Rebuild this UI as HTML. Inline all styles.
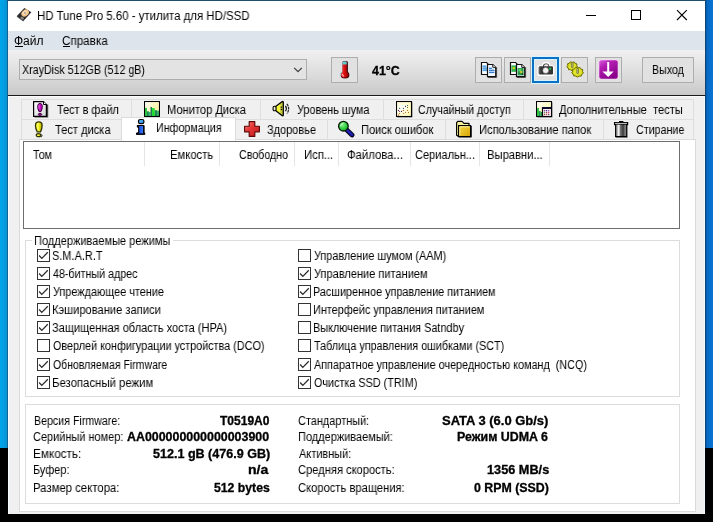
<!DOCTYPE html><html><head><meta charset="utf-8"><style>
*{box-sizing:border-box;margin:0;padding:0}
html,body{width:713px;height:522px;overflow:hidden;background:#000}
body{position:relative;font-family:"Liberation Sans",sans-serif;font-size:11px;color:#000}
.a{position:absolute}
.t{position:absolute;white-space:pre;transform-origin:0 0;line-height:normal;will-change:transform}
#deskL{left:0;top:0;width:8px;height:448px;background:linear-gradient(90deg,#00a6e9 0%,#029fe2 50%,#0b90cf 84%,#0d6aa0 91%,#0b5788 100%)}
#deskR{left:705px;top:0;width:8px;height:448px;background:linear-gradient(90deg,#0a3f70 0%,#0a4a82 10%,#0766be 22%,#066ecb 50%,#0673d2 100%)}
#deskT{left:7px;top:0;width:699px;height:1px;background:#234f6c}
#win{left:8px;top:1px;width:697px;height:513px;background:#f0f0f0;box-shadow:inset 1px 0 0 #f3fcff, inset -1px 0 0 #eefaff}
#title{left:0;top:0;width:697px;height:30px;background:#fff}
#menu{left:0;top:30px;width:697px;height:19px;background:#dee4ec}
#tool{left:0;top:49px;width:697px;height:45px;background:linear-gradient(180deg,#f2f0f1 0%,#e8e7e8 25%,#dcdcdc 55%,#c9c9c9 100%)}
#tline{left:0;top:94px;width:697px;height:1px;background:#1a1a1a}
#wline{left:0;top:95px;width:697px;height:1px;background:#fcfcfc}
.btn{position:absolute;top:57px;width:27px;height:26px;background:#e1e1e1;border:1px solid #adadad}
.tab{position:absolute;height:20px;background:#f0f0f0;border:1px solid #dedede;border-bottom:none}
.cb{position:absolute;width:13px;height:13px;background:#fff;border:1px solid #333}
.gb{position:absolute;border:1px solid #dcdcdc}
.hs{position:absolute;top:141px;width:1px;height:24px;background:#e5e5e5}
</style></head><body><div class="a" id="deskL"></div><div class="a" id="deskR"></div><div class="a" id="deskT"></div>
<div class="a" id="win"><div class="a" id="title"></div><div class="a" id="menu"></div><div class="a" id="tool"></div><div class="a" id="tline"></div><div class="a" id="wline"></div></div>
<div class="a" style="left:19px;top:59px;width:288px;height:21px;background:#e3e3e3;border:1px solid #adadad"></div><svg class="a" style="left:293px;top:67px" width="10" height="6" viewBox="0 0 10 6"><path d="M1.2 0.9 L5 4.7 L8.8 0.9" fill="none" stroke="#404040" stroke-width="1.3"/></svg><div class="btn" style="left:331px;top:57px"></div><div class="btn" style="left:475px;top:57px"></div><div class="btn" style="left:504px;top:57px"></div><div class="btn" style="left:561px;top:57px"></div><div class="btn" style="left:595px;top:57px"></div><div class="btn" style="left:532px;top:57px;border:2px solid #0a70c4;box-shadow:0 0 0 1px rgba(215,245,255,.9), inset 0 0 0 1px rgba(215,245,255,.9)"></div><div class="btn" style="left:642px;top:57px;width:52px"></div><div class="tab" style="left:21px;top:99px;width:111px"></div><div class="tab" style="left:131px;top:99px;width:130px"></div><div class="tab" style="left:260px;top:99px;width:124px"></div><div class="tab" style="left:383px;top:99px;width:141px"></div><div class="tab" style="left:523px;top:99px;width:171px"></div><div class="tab" style="left:21px;top:119px;width:101px;height:21px"></div><div class="tab" style="left:121px;top:119px;width:115px;height:21px"></div><div class="tab" style="left:235px;top:119px;width:93px;height:21px"></div><div class="tab" style="left:327px;top:119px;width:119px;height:21px"></div><div class="tab" style="left:445px;top:119px;width:159px;height:21px"></div><div class="tab" style="left:603px;top:119px;width:91px;height:21px"></div><div class="a" style="left:19px;top:139px;width:677px;height:373px;background:#fff;border:1px solid #dadada"></div><div class="a" style="left:121px;top:117px;width:115px;height:24px;background:#fff;border:1px solid #dcdcdc;border-bottom:none"></div><div class="a" style="left:23px;top:141px;width:657px;height:88px;background:#fff;border:1px solid #6e6e6e"></div><div class="hs" style="left:144px;top:142px"></div><div class="hs" style="left:219px;top:142px"></div><div class="hs" style="left:294px;top:142px"></div><div class="hs" style="left:338px;top:142px"></div><div class="hs" style="left:410px;top:142px"></div><div class="hs" style="left:479px;top:142px"></div><div class="hs" style="left:549px;top:142px"></div><div class="gb" style="left:25px;top:240px;width:655px;height:157px"></div><div class="a" style="left:32px;top:236px;width:141px;height:10px;background:#fff"></div><div class="gb" style="left:25px;top:404px;width:655px;height:100px"></div><div class="cb" style="left:37px;top:249px"><svg width="11" height="11" viewBox="0 0 11 11" style="position:absolute;left:0;top:0"><path d="M1.1 5.5 L3.8 8.4 L9.8 2.3" fill="none" stroke="#2a2a2a" stroke-width="1.25"/></svg></div><div class="cb" style="left:298px;top:249px"></div><div class="cb" style="left:37px;top:267px"><svg width="11" height="11" viewBox="0 0 11 11" style="position:absolute;left:0;top:0"><path d="M1.1 5.5 L3.8 8.4 L9.8 2.3" fill="none" stroke="#2a2a2a" stroke-width="1.25"/></svg></div><div class="cb" style="left:298px;top:267px"><svg width="11" height="11" viewBox="0 0 11 11" style="position:absolute;left:0;top:0"><path d="M1.1 5.5 L3.8 8.4 L9.8 2.3" fill="none" stroke="#2a2a2a" stroke-width="1.25"/></svg></div><div class="cb" style="left:37px;top:285px"><svg width="11" height="11" viewBox="0 0 11 11" style="position:absolute;left:0;top:0"><path d="M1.1 5.5 L3.8 8.4 L9.8 2.3" fill="none" stroke="#2a2a2a" stroke-width="1.25"/></svg></div><div class="cb" style="left:298px;top:285px"><svg width="11" height="11" viewBox="0 0 11 11" style="position:absolute;left:0;top:0"><path d="M1.1 5.5 L3.8 8.4 L9.8 2.3" fill="none" stroke="#2a2a2a" stroke-width="1.25"/></svg></div><div class="cb" style="left:37px;top:303px"><svg width="11" height="11" viewBox="0 0 11 11" style="position:absolute;left:0;top:0"><path d="M1.1 5.5 L3.8 8.4 L9.8 2.3" fill="none" stroke="#2a2a2a" stroke-width="1.25"/></svg></div><div class="cb" style="left:298px;top:303px"></div><div class="cb" style="left:37px;top:321px"><svg width="11" height="11" viewBox="0 0 11 11" style="position:absolute;left:0;top:0"><path d="M1.1 5.5 L3.8 8.4 L9.8 2.3" fill="none" stroke="#2a2a2a" stroke-width="1.25"/></svg></div><div class="cb" style="left:298px;top:321px"></div><div class="cb" style="left:37px;top:339px"></div><div class="cb" style="left:298px;top:339px"></div><div class="cb" style="left:37px;top:358px"><svg width="11" height="11" viewBox="0 0 11 11" style="position:absolute;left:0;top:0"><path d="M1.1 5.5 L3.8 8.4 L9.8 2.3" fill="none" stroke="#2a2a2a" stroke-width="1.25"/></svg></div><div class="cb" style="left:298px;top:358px"><svg width="11" height="11" viewBox="0 0 11 11" style="position:absolute;left:0;top:0"><path d="M1.1 5.5 L3.8 8.4 L9.8 2.3" fill="none" stroke="#2a2a2a" stroke-width="1.25"/></svg></div><div class="cb" style="left:37px;top:376px"><svg width="11" height="11" viewBox="0 0 11 11" style="position:absolute;left:0;top:0"><path d="M1.1 5.5 L3.8 8.4 L9.8 2.3" fill="none" stroke="#2a2a2a" stroke-width="1.25"/></svg></div><div class="cb" style="left:298px;top:376px"><svg width="11" height="11" viewBox="0 0 11 11" style="position:absolute;left:0;top:0"><path d="M1.1 5.5 L3.8 8.4 L9.8 2.3" fill="none" stroke="#2a2a2a" stroke-width="1.25"/></svg></div><svg class="a" style="left:16px;top:7px" width="17" height="15" viewBox="0 0 17 15">
<polygon points="8.4,1 15.4,5.2 7.4,14 0.9,9" fill="#2b2b2b"/>
<polygon points="0.9,9 7.4,14 7.4,14.6 0.9,9.8" fill="#111"/>
<ellipse cx="9.1" cy="6.1" rx="4.1" ry="3.1" transform="rotate(-38 9.1 6.1)" fill="#f1c58d"/>
<ellipse cx="8.7" cy="5.6" rx="2.4" ry="1.8" transform="rotate(-38 8.7 5.6)" fill="#fbe0b8"/>
<circle cx="8.9" cy="5.9" r="0.9" fill="#9a9a9a"/>
<polygon points="5.4,9.6 8.2,11.3 7.0,12.7 4.3,10.9" fill="#8f8f8f"/>
</svg><svg class="a" style="left:339px;top:60px" width="12" height="20" viewBox="0 0 12 20">
<defs><linearGradient id="th" x1="0" x2="1"><stop offset="0" stop-color="#ff5a5a"/><stop offset=".4" stop-color="#e41212"/><stop offset="1" stop-color="#9a0000"/></linearGradient></defs>
<path d="M3.6 2.4 Q3.6 1.1 4.8 1.1 H7.4 Q8.9 1.1 8.9 2.6 V11.8 Q10.4 13 10.4 14.9 Q10.4 18.4 6 18.4 Q1.6 18.4 1.6 14.9 Q1.6 13 3.6 11.8 Z" fill="#3a0808"/>
<path d="M3.6 2.4 Q3.6 1.5 4.6 1.5 H6.8 Q7.7 1.5 7.7 2.6 V12 Q9.4 13 9.4 14.7 Q9.4 17.5 5.7 17.5 Q2.1 17.5 2.1 14.7 Q2.1 13 3.6 12 Z" fill="url(#th)"/>
<path d="M3.6 2.4 Q3.6 1.5 4.6 1.5 H6.8 Q7.7 1.5 7.7 2.6 V4.4 H3.6 Z" fill="#55d2d2"/>
<path d="M2.4 12.2 Q1.0 13.4 1.2 15.6" stroke="#a8d4dc" stroke-width="1.1" fill="none"/>
<path d="M3.4 14.2 Q3.6 15.8 5 16.2" stroke="#ffd8d8" stroke-width="1" fill="none"/>
</svg><svg class="a" style="left:480px;top:61px" width="18" height="18" viewBox="0 0 18 18">
<path d="M1.5 1.5 H6.6 L8.5 3.4 V13.5 H1.5 Z" fill="#fff" stroke="#111" stroke-width="1.2"/>
<rect x="2.6" y="4.6" width="4.4" height="6" fill="#bfeaff"/><rect x="2.6" y="4.6" width="3.4" height="1.1" fill="#2b7fd0"/><rect x="2.6" y="6.6" width="4.4" height="1.1" fill="#2b7fd0"/><rect x="2.6" y="8.6" width="4.4" height="1.1" fill="#2b7fd0"/>
<path d="M8 16.4 H16.6 V6.2" stroke="#555" stroke-width="1" fill="none"/>
<path d="M7.5 3.5 H12.8 L15.7 6.4 V15.6 H7.5 Z" fill="#f4f8ff" stroke="#111" stroke-width="1.2"/>
<path d="M12.8 3.5 V6.4 H15.7" fill="#fff" stroke="#111" stroke-width="1"/>
<rect x="9" y="6.8" width="5.4" height="6" fill="#d4ecff"/><rect x="9" y="6.8" width="3" height="1.1" fill="#2b6fc8"/><rect x="9" y="8.8" width="5.4" height="1.1" fill="#2b6fc8"/><rect x="9" y="10.8" width="5.4" height="1.1" fill="#2b6fc8"/>
</svg><svg class="a" style="left:509px;top:61px" width="18" height="18" viewBox="0 0 18 18">
<path d="M1.5 1.5 H6.6 L8.5 3.4 V13.5 H1.5 Z" fill="#fff" stroke="#111" stroke-width="1.2"/>
<rect x="2.4" y="4.4" width="5" height="6.4" fill="#2fb050"/><rect x="3.6" y="6" width="2.2" height="2.2" fill="#d8d820"/>
<path d="M8 16.4 H16.6 V6.2" stroke="#555" stroke-width="1" fill="none"/>
<path d="M7.5 3.5 H12.8 L15.7 6.4 V15.6 H7.5 Z" fill="#f4f8ff" stroke="#111" stroke-width="1.2"/>
<path d="M12.8 3.5 V6.4 H15.7" fill="#fff" stroke="#111" stroke-width="1"/>
<rect x="8.6" y="7" width="6" height="7.4" fill="#2a9a48"/><rect x="9.4" y="7.8" width="3" height="2.6" fill="#58d070"/><rect x="11.2" y="10" width="2" height="2" fill="#d8c820"/><rect x="12.8" y="12.4" width="1.4" height="1.4" fill="#222"/>
</svg><svg class="a" style="left:537px;top:62px" width="18" height="15" viewBox="0 0 18 15">
<path d="M5.5 4 Q6 0.8 8.6 0.8 H10 Q12.4 0.8 12.8 4 H15 Q16.6 4 16.6 5.6 V11.4 Q16.6 13.2 15 13.2 H3 Q1.2 13.2 1.2 11.4 V5.6 Q1.2 4 3 4 Z" fill="#fff" stroke="#fff" stroke-width="1.6"/>
<path d="M5.9 4.2 Q6.3 1.4 8.6 1.4 H10 Q12.1 1.4 12.4 4.2 H15 Q16 4.2 16 5.4 V11.6 Q16 12.6 15 12.6 H3 Q1.8 12.6 1.8 11.6 V5.4 Q1.8 4.2 3 4.2 Z" fill="#353535"/>
<path d="M6.8 4.2 Q7.2 2.3 8.8 2.3 H9.8 Q11.3 2.3 11.6 4.2 Z" fill="#f3e9e9"/>
<rect x="1.8" y="5" width="1.6" height="7" fill="#555"/>
<circle cx="8.7" cy="8.4" r="2.9" fill="#f6f2f2"/>
<circle cx="8.7" cy="8.4" r="2.9" fill="none" stroke="#777" stroke-width=".5"/>
<circle cx="13.1" cy="6.7" r="1.2" fill="#1fb04a"/>
</svg><svg class="a" style="left:565px;top:60px" width="22" height="20" viewBox="0 0 22 20"><polygon points="12.59,7.12 11.04,8.17 10.63,9.81 8.63,9.78 7.06,10.82 5.55,9.72 3.56,9.66 3.25,8.01 1.76,6.89 2.79,5.45 2.51,3.79 4.40,3.24 5.45,1.82 7.31,2.42 9.21,1.90 10.18,3.37 12.03,3.99 11.65,5.64" fill="#d3d71a" stroke="#6d6f00" stroke-width="1" stroke-linejoin="round"/><ellipse cx="7.2" cy="6.2" rx="3.3" ry="2.772" fill="#e2e532"/><rect x="6.4" y="2.6" width="1.7" height="5.2" rx=".8" fill="#b9b98a" stroke="#5c5c20" stroke-width=".6"/><polygon points="18.48,13.10 16.87,14.29 16.34,16.04 14.19,16.08 12.45,17.14 10.77,16.01 8.63,15.88 8.21,14.11 6.67,12.85 7.70,11.27 7.48,9.47 9.48,8.81 10.69,7.32 12.73,7.90 14.80,7.41 15.91,8.95 17.87,9.69 17.54,11.48" fill="#d3d71a" stroke="#6d6f00" stroke-width="1" stroke-linejoin="round"/><ellipse cx="12.6" cy="12.1" rx="3.8" ry="3.1919999999999997" fill="#e2e532"/><rect x="11.799999999999999" y="8.5" width="1.7" height="5.2" rx=".8" fill="#b9b98a" stroke="#5c5c20" stroke-width=".6"/></svg><svg class="a" style="left:598px;top:59px" width="21" height="21" viewBox="0 0 21 21">
<defs><linearGradient id="pg" x1="0" y1="0" x2=".6" y2="1"><stop offset="0" stop-color="#d95ad9"/><stop offset=".35" stop-color="#b31db3"/><stop offset="1" stop-color="#8a008a"/></linearGradient></defs>
<rect x="0.6" y="0.6" width="19.8" height="19.8" rx="2.6" fill="#f4d6f4"/>
<rect x="1.3" y="1.3" width="18.4" height="18.4" rx="2" fill="url(#pg)"/>
<path d="M9.2 3 H11.2 V12.6 H15.6 L10.2 18 L4.4 12.6 H9.2 Z" fill="#fff"/>
</svg><svg class="a" style="left:33px;top:101px" width="16" height="17" viewBox="0 0 16 17">
<defs><linearGradient id="pgf" x1="0" y1="0" x2="1" y2="1"><stop offset="0" stop-color="#fff"/><stop offset="1" stop-color="#d4d4d4"/></linearGradient></defs>
<path d="M1.5 15.9 H14.6 V3.6" stroke="#444" stroke-width="1.2" fill="none"/>
<path d="M0.6 0.6 H10.5 L13.4 3.5 V15.4 H0.6 Z" fill="url(#pgf)" stroke="#000" stroke-width="1.2"/>
<path d="M10.5 0.6 V3.5 H13.4" fill="#fff" stroke="#000" stroke-width="1"/>
<path d="M7 2.4 Q9.3 2.4 9.3 5.4 Q9.3 8 8 10.6 H6 Q4.7 8 4.7 5.4 Q4.7 2.4 7 2.4 Z" fill="#c410c4" stroke="#3a003a" stroke-width="1"/>
<path d="M6.2 3.8 Q5.7 5.4 6.2 7.6" stroke="#f07af0" stroke-width=".9" fill="none"/>
<ellipse cx="7" cy="13.4" rx="1.7" ry="1" fill="#c410c4" stroke="#3a003a" stroke-width="1"/>
</svg><svg class="a" style="left:34px;top:121px" width="10" height="17" viewBox="0 0 10 17">
<defs><linearGradient id="yg" x1="0" x2="1"><stop offset="0" stop-color="#f4f400"/><stop offset=".35" stop-color="#ffff70"/><stop offset=".6" stop-color="#e6e600"/><stop offset="1" stop-color="#a8a800"/></linearGradient></defs>
<path d="M4.8 0.9 Q8.1 0.9 8.1 4.4 Q8.1 7.4 6.6 10.8 H3.2 Q1.5 7.4 1.5 4.4 Q1.5 0.9 4.8 0.9 Z" fill="url(#yg)" stroke="#303000" stroke-width="1.3"/>
<ellipse cx="4.6" cy="14.2" rx="2.3" ry="1.5" fill="url(#yg)" stroke="#303000" stroke-width="1.3"/>
<path d="M7.6 13.4 Q8.8 14.6 7.2 16.2" stroke="#222" stroke-width=".9" fill="none"/>
</svg><svg class="a" style="left:144px;top:101px" width="16" height="16" viewBox="0 0 16 16">
<defs><linearGradient id="mg" x1="0" y1="0" x2="1" y2=".6"><stop offset="0" stop-color="#ffffff"/><stop offset=".6" stop-color="#fff6bc"/><stop offset="1" stop-color="#fdf3a8"/></linearGradient></defs>
<rect x="0.5" y="0.5" width="15" height="15" fill="url(#mg)"/>
<rect x="1" y="6.9" width="2" height="8.2" fill="#2fc840"/>
<rect x="3" y="10.3" width="1.9" height="4.8" fill="#1a8a52"/>
<rect x="4.9" y="11" width="1.6" height="4.1" fill="#34b070"/>
<rect x="6.5" y="6" width="1.5" height="9.1" fill="#1a7a52"/>
<rect x="8" y="7.1" width="2.8" height="8" fill="#22dc32"/>
<rect x="10.8" y="9.2" width="2.3" height="5.9" fill="#1a8a52"/>
<rect x="13.1" y="9.7" width="1.9" height="5.4" fill="#32a862"/>
<rect x="0.5" y="0.5" width="15" height="15" fill="none" stroke="#000" stroke-width="1.1"/>
</svg><svg class="a" style="left:135px;top:118px" width="12" height="18" viewBox="0 0 12 18">
<defs><linearGradient id="ig" x1="0" x2="1"><stop offset="0" stop-color="#0a2fd0"/><stop offset=".6" stop-color="#2a66f0"/><stop offset="1" stop-color="#4a8af8"/></linearGradient>
<linearGradient id="ih" x1="0" y1="0" x2="1" y2="1"><stop offset="0" stop-color="#5cc0fa"/><stop offset="1" stop-color="#2a80e0"/></linearGradient></defs>
<rect x="3.5" y="1.5" width="5.4" height="4.2" rx="1.7" fill="url(#ih)" stroke="#000" stroke-width="1.2"/>
<path d="M2.4 7.5 H8.7 V15 H9.7 V16.3 H1.5 V15.3 L3.7 14.5 V8.9 H2.4 Z" fill="url(#ig)" stroke="#000" stroke-width="1.1" stroke-linejoin="round"/>
<path d="M9 7.6 V15.6" stroke="#000" stroke-width="1"/>
<path d="M1.4 16.1 H10" stroke="#000" stroke-width="1.1"/>
</svg><svg class="a" style="left:272px;top:100px" width="18" height="17" viewBox="0 0 18 17">
<defs><linearGradient id="sg" x1="0" x2="1"><stop offset="0" stop-color="#ffff3a"/><stop offset=".6" stop-color="#f4f43c"/><stop offset=".62" stop-color="#d2d23c"/><stop offset="1" stop-color="#c4c43a"/></linearGradient></defs>
<path d="M3.6 6.4 L10.0 1.7 Q11.3 1.0 11.3 2.4 V14.8 Q11.3 16.2 10.0 15.5 L3.6 10.6 Z" fill="url(#sg)" stroke="#000" stroke-width="1.3" stroke-linejoin="round"/>
<rect x="1.1" y="6.3" width="2.9" height="4.4" rx="1.2" fill="#f2f2da" stroke="#000" stroke-width="1.1"/>
<circle cx="9.4" cy="7.2" r=".75" fill="#111"/><circle cx="9.4" cy="9.4" r=".75" fill="#111"/>
<path d="M13.5 5.8 Q15.3 8.5 13.5 11.3" stroke="#111" stroke-width="1.2" fill="none"/>
<path d="M14.9 3.9 Q18.3 8.5 15 13.7" stroke="#222" stroke-width="1.2" fill="none" stroke-dasharray="2.6 0.7"/>
</svg><svg class="a" style="left:244px;top:121px" width="16" height="16" viewBox="0 0 16 16">
<defs><linearGradient id="rg" x1="0" y1="0" x2="1" y2="1"><stop offset="0" stop-color="#f79a9a"/><stop offset=".4" stop-color="#e83838"/><stop offset="1" stop-color="#c01818"/></linearGradient></defs>
<path d="M5.2 0.6 H10.8 V5.2 H15.4 V10.8 H10.8 V15.4 H5.2 V10.8 H0.6 V5.2 H5.2 Z" fill="url(#rg)" stroke="#5e0606" stroke-width="1.15" stroke-linejoin="round"/>
</svg><svg class="a" style="left:337px;top:120px" width="19" height="18" viewBox="0 0 19 18">
<defs><radialGradient id="mgn" cx=".4" cy=".35" r=".7"><stop offset="0" stop-color="#8cf08c"/><stop offset=".6" stop-color="#2fcf3f"/><stop offset="1" stop-color="#1a9a2a"/></radialGradient></defs>
<path d="M9.6 9.8 L15.0 15.0" stroke="#000018" stroke-width="4.8" stroke-linecap="round"/>
<path d="M10 10.0 L14.9 14.7" stroke="#2020b4" stroke-width="2.7" stroke-linecap="round"/>
<circle cx="6.4" cy="6.2" r="4.8" fill="url(#mgn)" stroke="#041a06" stroke-width="1.3"/>
<path d="M3.6 6.2 Q4 3.8 6.4 3.4" stroke="#d8ffd8" stroke-width="1" fill="none"/>
</svg><svg class="a" style="left:396px;top:101px" width="17" height="17" viewBox="0 0 17 17">
<defs><radialGradient id="rag" cx=".35" cy=".45" r=".8"><stop offset="0" stop-color="#ffffff"/><stop offset=".6" stop-color="#fffbd0"/><stop offset="1" stop-color="#fff6a8"/></radialGradient></defs>
<rect x="1.3" y="1.3" width="15" height="15" fill="#333"/>
<rect x="0.5" y="0.5" width="15" height="15" fill="url(#rag)" stroke="#000" stroke-width="1.1"/>
<circle cx="3.6" cy="7.3" r=".62" fill="#204858"/><circle cx="7.4" cy="7.3" r=".62" fill="#204858"/><circle cx="9.5" cy="5.4" r=".62" fill="#303070"/><circle cx="11.5" cy="4.5" r=".62" fill="#205060"/><circle cx="11.5" cy="6.5" r=".62" fill="#305030"/><circle cx="2.5" cy="9.4" r=".62" fill="#703070"/><circle cx="3.5" cy="10.5" r=".62" fill="#903080"/><circle cx="5.5" cy="10.4" r=".62" fill="#303050"/><circle cx="7.5" cy="9.4" r=".62" fill="#b06020"/><circle cx="11.5" cy="9.4" r=".62" fill="#c07020"/><circle cx="9.5" cy="11.4" r=".62" fill="#c87020"/><circle cx="12.5" cy="11.4" r=".62" fill="#c87020"/><circle cx="3.5" cy="12.5" r=".62" fill="#b06020"/><circle cx="7.5" cy="12.5" r=".62" fill="#c87020"/><circle cx="2.5" cy="14.0" r=".62" fill="#a03010"/>
</svg><svg class="a" style="left:455px;top:120px" width="17" height="18" viewBox="0 0 17 18">
<defs><linearGradient id="fg" x1="0" y1="0" x2="1" y2="1"><stop offset="0" stop-color="#f4d84a"/><stop offset="1" stop-color="#d8a400"/></linearGradient></defs>
<path d="M4 17 H16.6 V6" stroke="#333" stroke-width="1" fill="none"/>
<path d="M1.6 15.2 V2.6 L2.8 1.4 H7 L9 3.4 H14 V6 H3.6 V16.6 Z" fill="#f7ef9c" stroke="#000" stroke-width="1.2" stroke-linejoin="round"/>
<rect x="3.6" y="5.6" width="12" height="11" fill="url(#fg)" stroke="#000" stroke-width="1.2"/>
<path d="M4.8 15.6 V6.8 H14.4" stroke="#fbf0a0" stroke-width="1" fill="none"/>
</svg><svg class="a" style="left:536px;top:101px" width="17" height="17" viewBox="0 0 17 17">
<defs><linearGradient id="eg" x1="0" y1="0" x2="1" y2="1"><stop offset="0" stop-color="#ffffff"/><stop offset=".5" stop-color="#fbf9c4"/></linearGradient></defs>
<rect x="1.4" y="1.4" width="15" height="15" fill="#555"/>
<rect x="0.5" y="0.5" width="15" height="15" fill="url(#eg)"/>
<rect x="1" y="7" width="2" height="8" fill="#35c64a"/><rect x="3" y="10" width="1.6" height="5" fill="#1f9a50"/><rect x="4.6" y="11" width="1.4" height="4" fill="#1f9a50"/>
<rect x="6.5" y="6" width="9" height="9.4" fill="#fdeef0"/>
<path d="M6.5 15 V6.5 H15.4" stroke="#000" stroke-width="1.2" fill="none"/>
<rect x="6" y="6" width="9.6" height="2" fill="#0a0a30"/>
<g>
<circle cx="8.6" cy="9.7" r=".7" fill="#7a2a7a"/><circle cx="10.6" cy="9.7" r=".7" fill="#2020b0"/><circle cx="12.7" cy="9.7" r=".7" fill="#7a2a9a"/>
<circle cx="8.6" cy="11.7" r=".7" fill="#4a8a4a"/><circle cx="10.6" cy="11.7" r=".7" fill="#8a3030"/><circle cx="12.7" cy="11.7" r=".7" fill="#c03030"/>
<circle cx="8.6" cy="13.6" r=".7" fill="#8a3030"/><circle cx="10.6" cy="13.6" r=".7" fill="#c03030"/><circle cx="12.7" cy="13.6" r=".7" fill="#202080"/>
</g>
<rect x="0.5" y="0.5" width="15" height="15" fill="none" stroke="#000" stroke-width="1.1"/>
</svg><svg class="a" style="left:613px;top:120px" width="16" height="18" viewBox="0 0 16 18">
<defs><linearGradient id="tg" x1="0" x2="1"><stop offset="0" stop-color="#555"/><stop offset=".22" stop-color="#e8e8e8"/><stop offset=".3" stop-color="#f4f4f4"/><stop offset=".42" stop-color="#777"/><stop offset=".7" stop-color="#3a3a3a"/><stop offset=".9" stop-color="#8a8a8a"/><stop offset="1" stop-color="#444"/></linearGradient></defs>
<rect x="6" y="1" width="4.4" height="2" fill="#000"/>
<rect x="1" y="2" width="14.2" height="3.2" fill="#000"/>
<rect x="2" y="2.9" width="12" height="1.1" fill="#b8b8b8"/>
<rect x="2" y="4.4" width="12.4" height="12.8" fill="#000"/>
<rect x="2.9" y="4.6" width="10.4" height="11.4" fill="url(#tg)"/>
<path d="M3 17.5 H14.6" stroke="#555" stroke-width=".7" fill="none"/>
</svg><svg class="a" style="left:580px;top:5px" width="120" height="22" viewBox="0 0 120 22"><path d="M6 10.5 H16" stroke="#000" stroke-width="1"/><rect x="51.5" y="5.5" width="9" height="9" fill="none" stroke="#000" stroke-width="1"/><path d="M97 5.2 L106.8 15 M106.8 5.2 L97 15" stroke="#000" stroke-width="1.1"/></svg><div class="a" style="left:15px;top:46px;width:8px;height:1px;background:#000"></div><div class="a" style="left:63px;top:46px;width:7px;height:1px;background:#000"></div><span class="t" style="left:36.85px;top:9px;font-size:12px;transform:scaleX(0.9523);-webkit-text-stroke:0;">HD Tune Pro 5.60 - утилита для HD/SSD</span><span class="t" style="left:14.40px;top:34px;font-size:12px;transform:scaleX(1.0000);">Файл</span><span class="t" style="left:61.83px;top:34px;font-size:12px;transform:scaleX(0.9696);">Справка</span><span class="t" style="left:32.60px;top:148px;font-size:12px;transform:scaleX(0.8857);">Том</span><span class="t" style="left:169.76px;top:148px;font-size:12px;transform:scaleX(0.9378);">Емкость</span><span class="t" style="left:238.91px;top:148px;font-size:12px;transform:scaleX(0.8889);">Свободно</span><span class="t" style="left:304.36px;top:148px;font-size:12px;transform:scaleX(0.9379);">Исп...</span><span class="t" style="left:347.16px;top:148px;font-size:12px;transform:scaleX(0.9439);">Файлова...</span><span class="t" style="left:414.88px;top:148px;font-size:12px;transform:scaleX(0.9190);">Сериальн...</span><span class="t" style="left:486.87px;top:148px;font-size:12px;transform:scaleX(0.9345);">Выравни...</span><span class="t" style="left:167.07px;top:103px;font-size:12px;transform:scaleX(0.9262);">Монитор Диска</span><span class="t" style="left:296.50px;top:103px;font-size:12px;transform:scaleX(0.9062);">Уровень шума</span><span class="t" style="left:417.71px;top:103px;font-size:12px;transform:scaleX(0.8874);">Случайный доступ</span><span class="t" style="left:559.00px;top:103px;font-size:12px;transform:scaleX(0.9248);">Дополнительные  тесты</span><span class="t" style="left:266.59px;top:123px;font-size:12px;transform:scaleX(0.9135);">Здоровье</span><span class="t" style="left:635.81px;top:123px;font-size:12px;transform:scaleX(0.8925);">Стирание</span><span class="t" style="left:34.08px;top:234px;font-size:12px;transform:scaleX(0.9190);">Поддерживаемые режимы</span><span class="t" style="left:52.29px;top:249px;font-size:12px;transform:scaleX(0.9130);">S.M.A.R.T</span><span class="t" style="left:53.20px;top:267px;font-size:12px;transform:scaleX(0.8915);">48-битный адрес</span><span class="t" style="left:53.20px;top:285px;font-size:12px;transform:scaleX(0.9082);">Упреждающее чтение</span><span class="t" style="left:52.27px;top:303px;font-size:12px;transform:scaleX(0.9287);">Кэширование записи</span><span class="t" style="left:52.28px;top:321px;font-size:12px;transform:scaleX(0.9213);">Защищенная область хоста (HPA)</span><span class="t" style="left:53.20px;top:339px;font-size:12px;transform:scaleX(0.9021);">Оверлей конфигурации устройства (DCO)</span><span class="t" style="left:53.20px;top:358px;font-size:12px;transform:scaleX(0.8754);">Обновляемая Firmware</span><span class="t" style="left:52.25px;top:376px;font-size:12px;transform:scaleX(0.9467);">Безопасный режим</span><span class="t" style="left:314.30px;top:249px;font-size:12px;transform:scaleX(0.9055);">Управление шумом (AAM)</span><span class="t" style="left:314.30px;top:267px;font-size:12px;transform:scaleX(0.9195);">Управление питанием</span><span class="t" style="left:313.40px;top:285px;font-size:12px;transform:scaleX(0.9020);">Расширенное управление питанием</span><span class="t" style="left:313.39px;top:303px;font-size:12px;transform:scaleX(0.9075);">Интерфейс управления питанием</span><span class="t" style="left:313.39px;top:321px;font-size:12px;transform:scaleX(0.9073);">Выключение питания Satndby</span><span class="t" style="left:314.30px;top:339px;font-size:12px;transform:scaleX(0.8991);">Таблица управления ошибками (SCT)</span><span class="t" style="left:314.30px;top:358px;font-size:12px;transform:scaleX(0.9000);">Аппаратное управление очередностью команд  (NCQ)</span><span class="t" style="left:314.30px;top:376px;font-size:12px;transform:scaleX(0.9009);">Очистка SSD (TRIM)</span><span class="t" style="left:33.51px;top:414px;font-size:12px;transform:scaleX(0.8863);">Версия Firmware:</span><span class="t" style="left:33.49px;top:430px;font-size:12px;transform:scaleX(0.9134);">Серийный номер:</span><span class="t" style="left:33.42px;top:447px;font-size:12px;transform:scaleX(0.9787);">Емкость:</span><span class="t" style="left:33.49px;top:463px;font-size:12px;transform:scaleX(0.9105);">Буфер:</span><span class="t" style="left:33.45px;top:481px;font-size:12px;transform:scaleX(0.9461);">Размер сектора:</span><span class="t" style="left:219.50px;top:414px;font-size:12px;transform:scaleX(1.0020);font-weight:700;-webkit-text-stroke:0.3px #000;">T0519A0</span><span class="t" style="left:127.00px;top:430px;font-size:12px;transform:scaleX(1.0336);font-weight:700;-webkit-text-stroke:0.3px #000;">AA000000000000003900</span><span class="t" style="left:152.55px;top:447px;font-size:12px;transform:scaleX(1.0455);font-weight:700;-webkit-text-stroke:0.3px #000;">512.1 gB (476.9 GB)</span><span class="t" style="left:247.53px;top:463px;font-size:12px;transform:scaleX(1.1706);font-weight:700;-webkit-text-stroke:0.3px #000;">n/a</span><span class="t" style="left:213.58px;top:481px;font-size:12px;transform:scaleX(1.0189);font-weight:700;-webkit-text-stroke:0.3px #000;">512 bytes</span><span class="t" style="left:297.69px;top:414px;font-size:12px;transform:scaleX(0.9105);">Стандартный:</span><span class="t" style="left:297.68px;top:430px;font-size:12px;transform:scaleX(0.9157);">Поддерживаемый:</span><span class="t" style="left:298.60px;top:447px;font-size:12px;transform:scaleX(0.9125);">Активный:</span><span class="t" style="left:297.67px;top:463px;font-size:12px;transform:scaleX(0.9284);">Средняя скорость:</span><span class="t" style="left:297.67px;top:481px;font-size:12px;transform:scaleX(0.9321);">Скорость вращения:</span><span class="t" style="left:442.12px;top:414px;font-size:12px;transform:scaleX(1.0804);font-weight:700;-webkit-text-stroke:0.3px #000;">SATA 3 (6.0 Gb/s)</span><span class="t" style="left:456.97px;top:430px;font-size:12px;transform:scaleX(1.0345);font-weight:700;-webkit-text-stroke:0.3px #000;">Режим UDMA 6</span><span class="t" style="left:486.54px;top:463px;font-size:12px;transform:scaleX(1.0596);font-weight:700;-webkit-text-stroke:0.3px #000;">1356 MB/s</span><span class="t" style="left:473.80px;top:481px;font-size:12px;transform:scaleX(1.0306);font-weight:700;-webkit-text-stroke:0.3px #000;">0 RPM (SSD)</span><span class="t" style="left:22.00px;top:63px;font-size:12px;transform:scaleX(0.8905);">XrayDisk 512GB (512 gB)</span><span class="t" style="left:372.20px;top:64px;font-size:12px;transform:scaleX(1.0385);font-weight:700;-webkit-text-stroke:0.3px #000;">41°C</span><span class="t" style="left:652.11px;top:63px;font-size:12px;transform:scaleX(0.8857);">Выход</span><span class="t" style="left:56.70px;top:103px;font-size:12px;transform:scaleX(0.9090);">Тест в файл</span><span class="t" style="left:54.50px;top:123px;font-size:12px;transform:scaleX(0.9250);">Тест диска</span><span class="t" style="left:155.81px;top:121px;font-size:12px;transform:scaleX(0.8931);">Информация</span><span class="t" style="left:360.78px;top:123px;font-size:12px;transform:scaleX(0.9221);">Поиск ошибок</span><span class="t" style="left:478.57px;top:123px;font-size:12px;transform:scaleX(0.9292);">Использование папок</span></body></html>
